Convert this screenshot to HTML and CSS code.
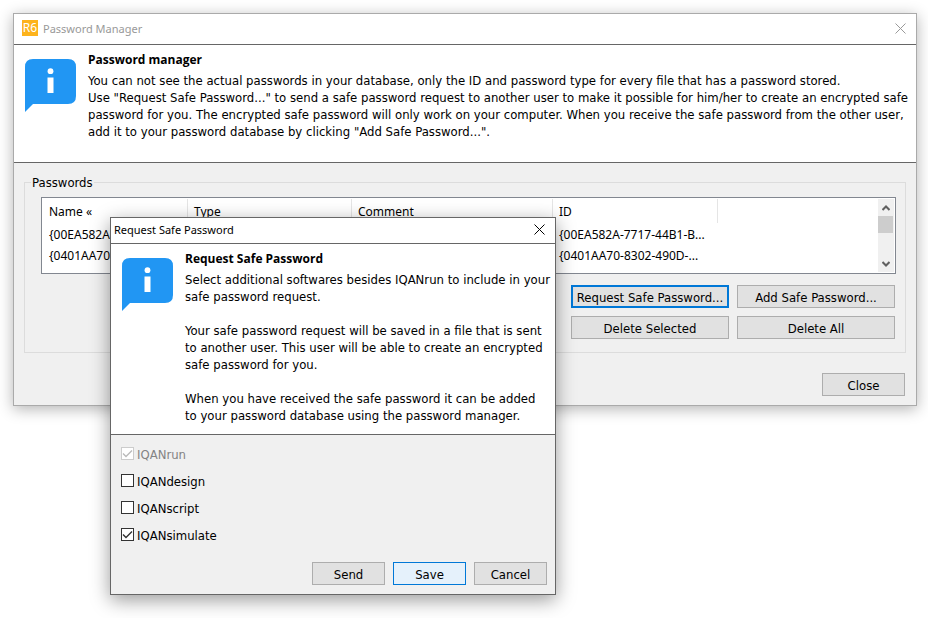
FILE: index.html
```html
<!DOCTYPE html>
<html lang="en">
<head>
    <meta charset="UTF-8">
    <meta name="viewport" content="width=device-width, initial-scale=1.0">
    <title>Password Manager</title>
    <link rel="stylesheet" href="styles.css">
</head>
<body>
    <!-- Password manager window -->
    <main class="window">
        <header class="titlebar">
            <svg class="app-icon" width="16" height="16" viewBox="0 0 16 16" aria-hidden="true">
                <rect width="16" height="16" fill="#fdb31c"/>
                <text x="8" y="12" text-anchor="middle" class="app-icon-text">R6</text>
            </svg>
            <span class="title">Password Manager</span>
            <button type="button" class="window-close" aria-label="Close window">
                <svg width="11" height="11" viewBox="0 0 11 11"><path d="M0.5 0.5L10.5 10.5M10.5 0.5L0.5 10.5"/></svg>
            </button>
        </header>

        <section class="info">
            <svg class="info-icon" width="51" height="53" viewBox="0 0 51 53" aria-hidden="true">
                <path d="M8 0H43Q51 0 51 8V37Q51 45 43 45H8L0 53V8Q0 0 8 0Z" fill="#2196f3"/>
                <circle cx="25.5" cy="12.2" r="2.9" fill="#fff"/>
                <rect x="22.5" y="18.5" width="6" height="15.5" fill="#fff"/>
            </svg>
            <div class="info-text">
                <h1>Password manager</h1>
                <p>You can not see the actual passwords in your database, only the ID and password type for every file that has a password stored.<br>
                Use "Request Safe Password..." to send a safe password request to another user to make it possible for him/her to create an encrypted safe password for you. The encrypted safe password will only work on your computer. When you receive the safe password from the other user, add it to your password database by clicking "Add Safe Password...".</p>
            </div>
        </section>

        <div class="content">
            <fieldset class="group">
                <legend>Passwords</legend>
                <div class="list">
                    <table>
                        <thead>
                            <tr>
                                <th class="col-name">Name «</th>
                                <th class="col-type">Type</th>
                                <th class="col-comment">Comment</th>
                                <th class="col-id">ID</th>
                                <td></td>
                            </tr>
                        </thead>
                        <tbody>
                            <tr>
                                <td>{00EA582A</td>
                                <td></td>
                                <td></td>
                                <td>{00EA582A-7717-44B1-B...</td>
                                <td></td>
                            </tr>
                            <tr>
                                <td>{0401AA70</td>
                                <td></td>
                                <td></td>
                                <td>{0401AA70-8302-490D-...</td>
                                <td></td>
                            </tr>
                        </tbody>
                    </table>
                    <div class="scrollbar">
                        <button type="button" aria-label="Scroll up">
                            <svg width="8" height="6" viewBox="0 0 8 6"><path d="M0.5 5L4 1.5L7.5 5"/></svg>
                        </button>
                        <div class="track"><div class="thumb"></div></div>
                        <button type="button" aria-label="Scroll down">
                            <svg width="8" height="6" viewBox="0 0 8 6"><path d="M0.5 1L4 4.5L7.5 1"/></svg>
                        </button>
                    </div>
                </div>
                <div class="actions">
                    <button type="button" class="btn focused">Request Safe Password...</button>
                    <button type="button" class="btn">Add Safe Password...</button>
                    <button type="button" class="btn">Delete Selected</button>
                    <button type="button" class="btn">Delete All</button>
                </div>
            </fieldset>
            <div class="footer">
                <button type="button" class="btn btn-close">Close</button>
            </div>
        </div>
    </main>

    <!-- Request dialog -->
    <div class="window dialog" role="dialog" aria-labelledby="dialog-title">
        <header class="titlebar">
            <span class="title" id="dialog-title">Request Safe Password</span>
            <button type="button" class="window-close" aria-label="Close dialog">
                <svg width="11" height="11" viewBox="0 0 11 11"><path d="M0.5 0.5L10.5 10.5M10.5 0.5L0.5 10.5"/></svg>
            </button>
        </header>

        <section class="info">
            <svg class="info-icon" width="51" height="53" viewBox="0 0 51 53" aria-hidden="true">
                <path d="M8 0H43Q51 0 51 8V37Q51 45 43 45H8L0 53V8Q0 0 8 0Z" fill="#2196f3"/>
                <circle cx="25.5" cy="12.2" r="2.9" fill="#fff"/>
                <rect x="22.5" y="18.5" width="6" height="15.5" fill="#fff"/>
            </svg>
            <div class="info-text">
                <h2>Request Safe Password</h2>
                <p>Select additional softwares besides IQANrun to include in your safe password request.</p>
                <p>Your safe password request will be saved in a file that is sent to another user. This user will be able to create an encrypted safe password for you.</p>
                <p>When you have received the safe password it can be added<br>to your password database using the password manager.</p>
            </div>
        </section>

        <form class="options">
            <label class="disabled"><input type="checkbox" name="run" checked disabled>IQANrun</label>
            <label><input type="checkbox" name="design">IQANdesign</label>
            <label><input type="checkbox" name="script">IQANscript</label>
            <label><input type="checkbox" name="simulate" checked>IQANsimulate</label>
            <div class="dialog-buttons">
                <button type="button" class="btn">Send</button>
                <button type="button" class="btn hot">Save</button>
                <button type="button" class="btn">Cancel</button>
            </div>
        </form>
    </div>
</body>
</html>
```
FILE: styles.css
```css
* {
    box-sizing: border-box;
}
body {
    margin: 0;
    padding: 13px 11px 24px 13px;
    background: #fff;
    color: #000;
    font-family: "DejaVu Sans Condensed", "Noto Sans", sans-serif;
    font-size: 13px;
    line-height: 17px;
}
button, input {
    font: inherit;
    color: inherit;
}
.window {
    border: 1px solid #aaa;
    background: #f0f0f0;
    box-shadow: 0 3px 14px rgba(0, 0, 0, 0.3);
}
.titlebar {
    display: flex;
    align-items: center;
    gap: 5px;
    height: 31px;
    padding: 0 10px 2px 8px;
    background: #fff;
    border-bottom: 1px solid #666;
    font-family: "Noto Sans", sans-serif;
    font-size: 11px;
    color: #999;
}
.app-icon-text {
    font-size: 12px;
    fill: #fff;
}
.window-close {
    display: flex;
    margin-left: auto;
    padding: 0;
    border: none;
    background: none;
}
.window-close path {
    fill: none;
    stroke: currentColor;
    stroke-width: 1;
}
.info {
    display: flex;
    align-items: flex-start;
    gap: 12px;
    padding: 5px 4px 22px 11px;
    background: #fff;
    border-bottom: 1px solid #666;
}
.info-icon {
    flex: none;
    margin-top: 9px;
}
h1, h2 {
    margin: 0 0 2px;
    font-family: "Open Sans", sans-serif;
    font-size: 12px;
    line-height: 20px;
}
p {
    margin: 0 0 17px;
}
p:last-child {
    margin-bottom: 0;
}
.content {
    padding: 11px 10px 9px;
}

/* Passwords list */
.group {
    margin: 0;
    padding: 6px 9px 13px 16px;
    border: 1px solid #dcdcdc;
}
.group legend {
    margin-left: -10px;
    padding: 0 1px;
}
.list {
    display: flex;
    height: 77px;
    padding: 1px 1px 1px 0;
    border: 1px solid #828790;
    background: #fff;
}
table {
    flex: 1;
    align-self: flex-start;
    table-layout: fixed;
    width: 100%;
    border-collapse: separate;
    border-spacing: 0;
    font-family: "Noto Sans", sans-serif;
    font-size: 12px;
}
th, td {
    height: 21px;
    padding: 1px 6px 0;
    overflow: hidden;
    text-align: left;
    white-space: nowrap;
}
th {
    height: 24px;
    border-right: 1px solid #e5e5e5;
    font-weight: normal;
}
th:first-child, td:first-child {
    padding-left: 7px;
}
.col-name { width: 146px; }
.col-type { width: 164px; }
.col-comment { width: 201px; }
.col-id { width: 165px; }
.scrollbar {
    display: flex;
    flex-direction: column;
    width: 16px;
    background: #f0f0f0;
}
.scrollbar button {
    display: flex;
    align-items: center;
    justify-content: center;
    height: 17px;
    padding: 0;
    border: none;
    background: none;
}
.scrollbar path {
    fill: none;
    stroke: #606060;
    stroke-width: 2;
}
.track {
    flex: 1;
}
.thumb {
    width: 15px;
    height: 17px;
    background: #cdcdcd;
}

/* Buttons */
.btn {
    height: 23px;
    padding: 1px 0 0;
    border: 1px solid #adadad;
    background: #e1e1e1;
    white-space: nowrap;
}
.btn.focused {
    border: 2px solid #0078d7;
}
.btn.hot {
    border-color: #0078d7;
    background: #e5f1fb;
}
.actions {
    display: grid;
    grid-template-columns: 158px 158px;
    justify-content: end;
    gap: 8px;
    padding: 11px 1px 0 0;
}
.footer {
    display: flex;
    justify-content: flex-end;
    padding: 20px 1px 0 0;
}
.btn-close {
    width: 83px;
}

/* Dialog lies over the manager window */
.dialog {
    position: absolute;
    top: 217px;
    left: 110px;
    width: 446px;
    border-color: #666;
    box-shadow: 0 5px 18px rgba(0, 0, 0, 0.4);
}
.dialog .titlebar {
    height: 26px;
    padding-left: 3px;
    color: #000;
}
.dialog .info {
    padding-bottom: 10px;
}
.options {
    display: flex;
    flex-direction: column;
    gap: 10px;
    padding: 11px 8px 9px 10px;
}
.options label {
    display: flex;
    align-items: center;
    gap: 3px;
}
.options .disabled {
    color: #838383;
}
input[type="checkbox"] {
    appearance: none;
    width: 13px;
    height: 13px;
    margin: 0 0 2px;
    border: 1px solid #333;
    background: #fff;
}
input[type="checkbox"]:checked {
    background: #fff url('data:image/svg+xml,<svg xmlns="http://www.w3.org/2000/svg" viewBox="0 0 11 11"><path d="M1 5.5L4 8.5L10 2.5" fill="none" stroke="%23333" stroke-width="1.4"/></svg>');
}
input[type="checkbox"]:disabled {
    border-color: #ccc;
    background-image: url('data:image/svg+xml,<svg xmlns="http://www.w3.org/2000/svg" viewBox="0 0 11 11"><path d="M1 5.5L4 8.5L10 2.5" fill="none" stroke="%23bbb" stroke-width="1.4"/></svg>');
}
.dialog-buttons {
    display: flex;
    justify-content: flex-end;
    gap: 8px;
    padding-top: 8px;
}
.dialog-buttons .btn {
    width: 73px;
}
```
